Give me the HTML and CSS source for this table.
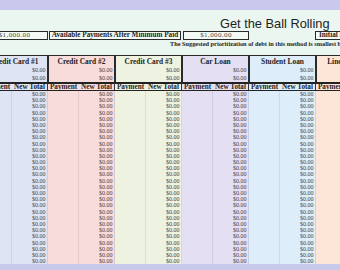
FILE: index.html
```html
<!DOCTYPE html>
<html>
<head>
<meta charset="utf-8">
<link rel="stylesheet" href="styles.css">
</head>
<body>
<div class="sheet">
  <div class="top">
    <div class="title-row"><span class="title">Get the Ball Rolling</span></div>
    <div class="summary">
      <div class="sbox num">$1,000.00</div>
      <div class="sbox lbl wide">Available Payments After Minimum Paid</div>
      <div class="sbox num after">$1,000.00</div>
      <div class="sbox lbl init">Initial Balance</div>
    </div>
    <div class="note">The Suggested prioritization of debt in this method is smallest balance first</div>
  </div>
  <div class="groups">
    <div class="grp g1">
      <div class="head"><div class="name">Credit Card #1</div><div class="hcells"><span></span><span class="t">$0.00</span><span></span><span class="t">$0.00</span></div></div>
      <div class="ph"><span>Payment</span><span>New Total</span></div>
      <div class="rows"><span class="p"></span><span class="t">$0.00</span><span class="p"></span><span class="t">$0.00</span><span class="p"></span><span class="t">$0.00</span><span class="p"></span><span class="t">$0.00</span><span class="p"></span><span class="t">$0.00</span><span class="p"></span><span class="t">$0.00</span><span class="p"></span><span class="t">$0.00</span><span class="p"></span><span class="t">$0.00</span><span class="p"></span><span class="t">$0.00</span><span class="p"></span><span class="t">$0.00</span><span class="p"></span><span class="t">$0.00</span><span class="p"></span><span class="t">$0.00</span><span class="p"></span><span class="t">$0.00</span><span class="p"></span><span class="t">$0.00</span><span class="p"></span><span class="t">$0.00</span><span class="p"></span><span class="t">$0.00</span><span class="p"></span><span class="t">$0.00</span><span class="p"></span><span class="t">$0.00</span><span class="p"></span><span class="t">$0.00</span><span class="p"></span><span class="t">$0.00</span><span class="p"></span><span class="t">$0.00</span><span class="p"></span><span class="t">$0.00</span><span class="p"></span><span class="t">$0.00</span><span class="p"></span><span class="t">$0.00</span><span class="p"></span><span class="t">$0.00</span><span class="p"></span><span class="t">$0.00</span><span class="p"></span><span class="t">$0.00</span><span class="p"></span><span class="t">$0.00</span></div>
    </div>
    <div class="grp g2">
      <div class="head"><div class="name">Credit Card #2</div><div class="hcells"><span></span><span class="t">$0.00</span><span></span><span class="t">$0.00</span></div></div>
      <div class="ph"><span>Payment</span><span>New Total</span></div>
      <div class="rows"><span class="p"></span><span class="t">$0.00</span><span class="p"></span><span class="t">$0.00</span><span class="p"></span><span class="t">$0.00</span><span class="p"></span><span class="t">$0.00</span><span class="p"></span><span class="t">$0.00</span><span class="p"></span><span class="t">$0.00</span><span class="p"></span><span class="t">$0.00</span><span class="p"></span><span class="t">$0.00</span><span class="p"></span><span class="t">$0.00</span><span class="p"></span><span class="t">$0.00</span><span class="p"></span><span class="t">$0.00</span><span class="p"></span><span class="t">$0.00</span><span class="p"></span><span class="t">$0.00</span><span class="p"></span><span class="t">$0.00</span><span class="p"></span><span class="t">$0.00</span><span class="p"></span><span class="t">$0.00</span><span class="p"></span><span class="t">$0.00</span><span class="p"></span><span class="t">$0.00</span><span class="p"></span><span class="t">$0.00</span><span class="p"></span><span class="t">$0.00</span><span class="p"></span><span class="t">$0.00</span><span class="p"></span><span class="t">$0.00</span><span class="p"></span><span class="t">$0.00</span><span class="p"></span><span class="t">$0.00</span><span class="p"></span><span class="t">$0.00</span><span class="p"></span><span class="t">$0.00</span><span class="p"></span><span class="t">$0.00</span><span class="p"></span><span class="t">$0.00</span></div>
    </div>
    <div class="grp g3">
      <div class="head"><div class="name">Credit Card #3</div><div class="hcells"><span></span><span class="t">$0.00</span><span></span><span class="t">$0.00</span></div></div>
      <div class="ph"><span>Payment</span><span>New Total</span></div>
      <div class="rows"><span class="p"></span><span class="t">$0.00</span><span class="p"></span><span class="t">$0.00</span><span class="p"></span><span class="t">$0.00</span><span class="p"></span><span class="t">$0.00</span><span class="p"></span><span class="t">$0.00</span><span class="p"></span><span class="t">$0.00</span><span class="p"></span><span class="t">$0.00</span><span class="p"></span><span class="t">$0.00</span><span class="p"></span><span class="t">$0.00</span><span class="p"></span><span class="t">$0.00</span><span class="p"></span><span class="t">$0.00</span><span class="p"></span><span class="t">$0.00</span><span class="p"></span><span class="t">$0.00</span><span class="p"></span><span class="t">$0.00</span><span class="p"></span><span class="t">$0.00</span><span class="p"></span><span class="t">$0.00</span><span class="p"></span><span class="t">$0.00</span><span class="p"></span><span class="t">$0.00</span><span class="p"></span><span class="t">$0.00</span><span class="p"></span><span class="t">$0.00</span><span class="p"></span><span class="t">$0.00</span><span class="p"></span><span class="t">$0.00</span><span class="p"></span><span class="t">$0.00</span><span class="p"></span><span class="t">$0.00</span><span class="p"></span><span class="t">$0.00</span><span class="p"></span><span class="t">$0.00</span><span class="p"></span><span class="t">$0.00</span><span class="p"></span><span class="t">$0.00</span></div>
    </div>
    <div class="grp g4">
      <div class="head"><div class="name">Car Loan</div><div class="hcells"><span></span><span class="t">$0.00</span><span></span><span class="t">$0.00</span></div></div>
      <div class="ph"><span>Payment</span><span>New Total</span></div>
      <div class="rows"><span class="p"></span><span class="t">$0.00</span><span class="p"></span><span class="t">$0.00</span><span class="p"></span><span class="t">$0.00</span><span class="p"></span><span class="t">$0.00</span><span class="p"></span><span class="t">$0.00</span><span class="p"></span><span class="t">$0.00</span><span class="p"></span><span class="t">$0.00</span><span class="p"></span><span class="t">$0.00</span><span class="p"></span><span class="t">$0.00</span><span class="p"></span><span class="t">$0.00</span><span class="p"></span><span class="t">$0.00</span><span class="p"></span><span class="t">$0.00</span><span class="p"></span><span class="t">$0.00</span><span class="p"></span><span class="t">$0.00</span><span class="p"></span><span class="t">$0.00</span><span class="p"></span><span class="t">$0.00</span><span class="p"></span><span class="t">$0.00</span><span class="p"></span><span class="t">$0.00</span><span class="p"></span><span class="t">$0.00</span><span class="p"></span><span class="t">$0.00</span><span class="p"></span><span class="t">$0.00</span><span class="p"></span><span class="t">$0.00</span><span class="p"></span><span class="t">$0.00</span><span class="p"></span><span class="t">$0.00</span><span class="p"></span><span class="t">$0.00</span><span class="p"></span><span class="t">$0.00</span><span class="p"></span><span class="t">$0.00</span><span class="p"></span><span class="t">$0.00</span></div>
    </div>
    <div class="grp g5">
      <div class="head"><div class="name">Student Loan</div><div class="hcells"><span></span><span class="t">$0.00</span><span></span><span class="t">$0.00</span></div></div>
      <div class="ph"><span>Payment</span><span>New Total</span></div>
      <div class="rows"><span class="p"></span><span class="t">$0.00</span><span class="p"></span><span class="t">$0.00</span><span class="p"></span><span class="t">$0.00</span><span class="p"></span><span class="t">$0.00</span><span class="p"></span><span class="t">$0.00</span><span class="p"></span><span class="t">$0.00</span><span class="p"></span><span class="t">$0.00</span><span class="p"></span><span class="t">$0.00</span><span class="p"></span><span class="t">$0.00</span><span class="p"></span><span class="t">$0.00</span><span class="p"></span><span class="t">$0.00</span><span class="p"></span><span class="t">$0.00</span><span class="p"></span><span class="t">$0.00</span><span class="p"></span><span class="t">$0.00</span><span class="p"></span><span class="t">$0.00</span><span class="p"></span><span class="t">$0.00</span><span class="p"></span><span class="t">$0.00</span><span class="p"></span><span class="t">$0.00</span><span class="p"></span><span class="t">$0.00</span><span class="p"></span><span class="t">$0.00</span><span class="p"></span><span class="t">$0.00</span><span class="p"></span><span class="t">$0.00</span><span class="p"></span><span class="t">$0.00</span><span class="p"></span><span class="t">$0.00</span><span class="p"></span><span class="t">$0.00</span><span class="p"></span><span class="t">$0.00</span><span class="p"></span><span class="t">$0.00</span><span class="p"></span><span class="t">$0.00</span></div>
    </div>
    <div class="grp g6">
      <div class="head"><div class="name">Line of Credit</div><div class="hcells"><span></span><span class="t">$0.00</span><span></span><span class="t">$0.00</span></div></div>
      <div class="ph"><span>Payment</span><span>New Total</span></div>
      <div class="rows"><span class="p"></span><span class="t">$0.00</span><span class="p"></span><span class="t">$0.00</span><span class="p"></span><span class="t">$0.00</span><span class="p"></span><span class="t">$0.00</span><span class="p"></span><span class="t">$0.00</span><span class="p"></span><span class="t">$0.00</span><span class="p"></span><span class="t">$0.00</span><span class="p"></span><span class="t">$0.00</span><span class="p"></span><span class="t">$0.00</span><span class="p"></span><span class="t">$0.00</span><span class="p"></span><span class="t">$0.00</span><span class="p"></span><span class="t">$0.00</span><span class="p"></span><span class="t">$0.00</span><span class="p"></span><span class="t">$0.00</span><span class="p"></span><span class="t">$0.00</span><span class="p"></span><span class="t">$0.00</span><span class="p"></span><span class="t">$0.00</span><span class="p"></span><span class="t">$0.00</span><span class="p"></span><span class="t">$0.00</span><span class="p"></span><span class="t">$0.00</span><span class="p"></span><span class="t">$0.00</span><span class="p"></span><span class="t">$0.00</span><span class="p"></span><span class="t">$0.00</span><span class="p"></span><span class="t">$0.00</span><span class="p"></span><span class="t">$0.00</span><span class="p"></span><span class="t">$0.00</span><span class="p"></span><span class="t">$0.00</span><span class="p"></span><span class="t">$0.00</span></div>
    </div>
  </div>
</div>
</body>
</html>
```

FILE: styles.css
```css
* { box-sizing: border-box; margin: 0; padding: 0; }
html, body { width: 340px; height: 270px; overflow: hidden; }
body {
  background: #c8c9eb;
  font-family: "Liberation Serif", "Times New Roman", serif;
  color: #222;
}
.sheet { margin-left: -19px; width: 420px; padding-top: 10px; }

.top { background: #eaf6ef; height: 45px; }
.title-row { height: 21px; padding-left: 239px; padding-top: 4px; }
.title {
  font-family: "Liberation Sans", Arial, sans-serif;
  font-size: 12.8px; line-height: 15px; color: #1e1e1e; white-space: nowrap;
}
.summary {
  display: grid;
  grid-template-columns: repeat(6, 67px);
  height: 9px;
}
.sbox {
  border: 1px solid #2a2a2a; background: #f3f9f5;
  height: 9px; line-height: 7px; text-align: center; white-space: nowrap; overflow: hidden;
}
.num { font-size: 7px; color: #4a4a4a; letter-spacing: 0.4px; }
.lbl { font-weight: bold; font-size: 7.2px; color: #1e1e1e; }
.wide { grid-column: 2 / span 2; margin: 0 1px; }
.after { grid-column: 4; margin-left: 1px; }
.init { grid-column: 6; text-align: left; padding-left: 3px; margin-left: -1px; }
.note {
  height: 8px; padding-left: 189px; white-space: nowrap;
  font-weight: bold; font-size: 6.3px; line-height: 8px; color: #1e1e1e;
}

.groups { display: flex; }
.grp { width: 67px; flex: none; }
.g1 { background: #dfe4f4; }
.g2 { background: #f8dbdb; }
.g3 { background: #eef2e0; }
.g4 { background: #e4dff2; }
.g5 { background: #ddedf9; }
.g6 { background: #fde6d8; }

.head { border: 1px solid #2a2a2a; border-bottom: none; }
.name {
  height: 11px; font-weight: bold; font-size: 7.4px; line-height: 11px;
  text-align: center; white-space: nowrap; color: #1e1e1e;
}
.hcells { display: grid; grid-template-columns: 30px 35px; grid-auto-rows: 7.5px; }

.ph {
  display: grid; grid-template-columns: 31px 35px;
  border-top: 2px solid #222; border-bottom: 1px solid #222; border-right: 1px solid #333;
  height: 9px; font-weight: bold; font-size: 7.2px; line-height: 6px;
  text-align: center; white-space: nowrap; color: #1e1e1e;
}
.rows { display: grid; grid-template-columns: 31px 36px; grid-auto-rows: 6.2px; }
.p { border-right: 1px solid rgba(60, 60, 90, 0.1); }
.t {
  text-align: right; padding-right: 1.5px; font-size: 6px; line-height: 6.2px;
  color: #444; white-space: nowrap;
}
.rows .t { border-right: 1px solid rgba(60, 60, 90, 0.13); }
```
